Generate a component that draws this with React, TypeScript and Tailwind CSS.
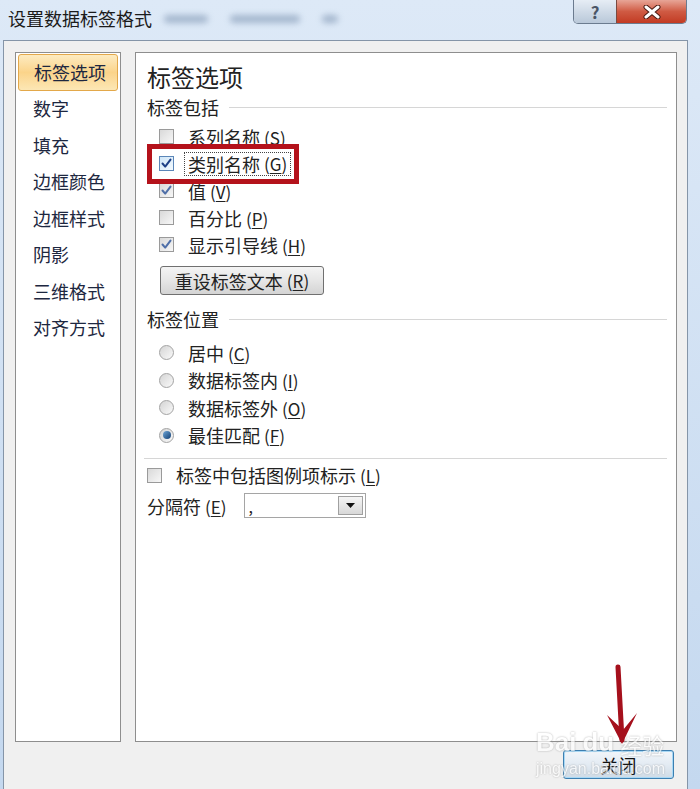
import type { ReactNode } from "react";

const FONT = { fontFamily: '"Microsoft YaHei", "Noto Sans CJK SC", "Noto Sans", sans-serif' };
const LATIN = { fontFamily: '"Liberation Sans", Arial, sans-serif' };

const navItems = ["标签选项", "数字", "填充", "边框颜色", "边框样式", "阴影", "三维格式", "对齐方式"];

function Key({ k }: { k: string }) {
  return (
    <span className="ml-[4px] text-[17px]">
      (<span className="underline underline-offset-2">{k}</span>)
    </span>
  );
}

function CheckBox({ checked, focus }: { checked?: boolean; focus?: boolean }) {
  return (
    <span
      className={
        "flex h-[15px] w-[15px] shrink-0 items-center justify-center border " +
        (focus
          ? "border-[#5b86b8] bg-gradient-to-br from-[#cfe6f8] to-[#f2f9fe]"
          : "border-[#9a9a9a] bg-gradient-to-br from-[#d9d9d9] to-[#f7f7f7]")
      }
    >
      {checked && (
        <svg width="11" height="11" viewBox="0 0 11 11">
          <path
            d="M1.5 5.5 L4.2 8.6 L9.5 1.6"
            fill="none"
            stroke={focus ? "#1d3f86" : "#4f6fa8"}
            strokeWidth="2"
            strokeLinecap="round"
            strokeLinejoin="round"
          />
        </svg>
      )}
    </span>
  );
}

function Radio({ on }: { on?: boolean }) {
  return (
    <span className="flex h-[15px] w-[15px] shrink-0 items-center justify-center rounded-full border border-[#a3a3a3] bg-gradient-to-br from-[#d4d4d4] to-[#fafafa]">
      {on && <span className="h-[8px] w-[8px] rounded-full bg-gradient-to-br from-[#6fa7d8] to-[#123f73]" />}
    </span>
  );
}

function CheckRow({ label, k, checked, focus }: { label: string; k: string; checked?: boolean; focus?: boolean }) {
  return (
    <div className="flex h-[27px] items-center pl-[12px]">
      <CheckBox checked={checked} focus={focus} />
      {focus ? (
        <span className="ml-[10px] flex items-center border border-dotted border-[#444] px-[3px] py-[2px] text-[18px] leading-none text-[#222]">
          {label}
          <Key k={k} />
        </span>
      ) : (
        <span className="ml-[14px] text-[18px] leading-none text-[#222]">
          {label}
          <Key k={k} />
        </span>
      )}
    </div>
  );
}

function RadioRow({ label, k, on }: { label: string; k: string; on?: boolean }) {
  return (
    <div className="flex h-[27.5px] items-center pl-[12px]">
      <Radio on={on} />
      <span className="ml-[14px] text-[18px] leading-none text-[#222]">
        {label}
        <Key k={k} />
      </span>
    </div>
  );
}

function Group({ children }: { children: ReactNode }) {
  return (
    <div className="flex h-[24px] items-center">
      <span className="text-[18px] leading-none text-[#222]">{children}</span>
      <span className="ml-[10px] h-px flex-1 bg-[#d6d6d6]" />
    </div>
  );
}

export default function App() {
  return (
    <div
      className="relative flex h-[789px] w-[700px] flex-col overflow-hidden bg-gradient-to-b from-[#dde9f7] to-[#c4d8ef]"
      style={FONT}
    >
      {/* title bar */}
      <div className="flex h-[40px] shrink-0 items-start">
        <span className="ml-[8px] mt-[7px] text-[18px] leading-[22px] text-[#1b1b1b]">设置数据标签格式</span>
        <div className="ml-[12px] mt-[15px] flex items-center gap-[22px] opacity-60">
          <span className="h-[8px] w-[44px] rounded bg-[#7e95b2] blur-[3px]" />
          <span className="h-[8px] w-[70px] rounded bg-[#7e95b2] blur-[3px]" />
          <span className="h-[8px] w-[16px] rounded bg-[#7e95b2] blur-[3px]" />
        </div>
        <div className="ml-auto mr-[13px] flex h-[24px] overflow-hidden rounded-b-[5px] border border-t-0 border-[#6b7b8f]">
          <div className="flex w-[42px] items-center justify-center bg-gradient-to-b from-[#e6edf5] to-[#b9c8d9] text-[17px] font-bold text-[#4a5566]">
            ?
          </div>
          <div className="flex w-[70px] items-center justify-center border-l border-[#7a4a40] bg-gradient-to-b from-[#e7a597] via-[#cf5a43] to-[#c23a22]">
            <svg width="18" height="14" viewBox="0 0 18 14">
              <path d="M3 2 L15 12 M15 2 L3 12" stroke="#4a1a12" strokeWidth="5" strokeLinecap="round" />
              <path d="M3 2 L15 12 M15 2 L3 12" stroke="#ffffff" strokeWidth="3" strokeLinecap="round" />
            </svg>
          </div>
        </div>
      </div>

      {/* body */}
      <div className="ml-[3px] mr-[12px] flex flex-1 flex-col border-l border-r border-t border-[#8595a8] bg-[#f0f0f0] pl-[11px] pr-[10px] pt-[11px]">
        <div className="flex h-[690px] gap-[14px]">
          {/* nav */}
          <div className="flex w-[106px] flex-col border border-[#8e8e8e] bg-white px-[2px] pt-[1px]">
            {navItems.map((item, i) => (
              <div
                key={item}
                className={
                  "flex h-[36.5px] items-center pl-[15px] text-[18px] text-[#1d2740] " +
                  (i === 0
                    ? "rounded-[3px] border border-[#e3a84a] bg-gradient-to-b from-[#fdebc0] via-[#fbd48a] to-[#fce7b5]"
                    : "")
                }
              >
                {item}
              </div>
            ))}
          </div>

          {/* content */}
          <div className="flex flex-1 flex-col border border-[#8e8e8e] bg-white pl-[11px] pr-[9px] pt-[10px]">
            <div className="h-[28px] text-[24px] leading-[28px] text-[#222]">标签选项</div>
            <div className="mt-[4px]">
              <Group>标签包括</Group>
            </div>
            <div className="mt-[4px] flex flex-col">
              <CheckRow label="系列名称" k="S" />
              <CheckRow label="类别名称" k="G" checked focus />
              <CheckRow label="值" k="V" checked />
              <CheckRow label="百分比" k="P" />
              <CheckRow label="显示引导线" k="H" checked />
            </div>
            <button className="ml-[13px] mt-[8px] flex h-[29px] w-[164px] items-center justify-center rounded-[3px] border border-[#707070] bg-gradient-to-b from-[#f4f4f4] via-[#e6e6e6] to-[#d4d4d4] text-[18px] leading-none text-[#222]">
              重设标签文本
              <Key k="R" />
            </button>
            <div className="mt-[12px]">
              <Group>标签位置</Group>
            </div>
            <div className="mt-[8px] flex flex-col">
              <RadioRow label="居中" k="C" />
              <RadioRow label="数据标签内" k="I" />
              <RadioRow label="数据标签外" k="O" />
              <RadioRow label="最佳匹配" k="F" on />
            </div>
            <div className="-ml-[3px] mt-[9px] h-px bg-[#d6d6d6]" />
            <div className="mt-[5px] flex h-[22px] items-center">
              <CheckBox />
              <span className="ml-[14px] text-[18px] leading-none text-[#222]">
                标签中包括图例项标示
                <Key k="L" />
              </span>
            </div>
            <div className="mt-[7px] flex h-[25px] items-center">
              <span className="text-[18px] leading-none text-[#222]">
                分隔符
                <Key k="E" />
              </span>
              <div className="ml-[17px] flex h-[25px] w-[122px] items-center border border-[#a5a5a5] bg-white">
                <span className="flex-1 pl-[4px] text-[16px] leading-none text-[#222]">,</span>
                <span className="mr-[2px] flex h-[19px] w-[25px] items-center justify-center border border-[#a0a0a0] bg-gradient-to-b from-[#f5f5f5] to-[#d8d8d8]">
                  <svg width="9" height="5" viewBox="0 0 9 5">
                    <path d="M0 0 H9 L4.5 5 Z" fill="#111" />
                  </svg>
                </span>
              </div>
            </div>
          </div>
        </div>

        <div className="mt-[8px] flex justify-end pr-[3px]">
          <button className="flex h-[29px] w-[111px] items-center justify-center rounded-[3px] border border-[#3c7fb1] bg-gradient-to-b from-[#f2f6fa] via-[#e3ebf3] to-[#cfdbe6] text-[18px] leading-none text-[#111] shadow-[inset_0_0_0_1px_#a8d8f5]">
            关闭
          </button>
        </div>
      </div>

      {/* watermark */}
      <div className="pointer-events-none absolute left-[536px] top-[729px] flex flex-col items-start opacity-70">
        <div className="flex items-end gap-[6px]">
          <span className="text-[26px] font-bold leading-none text-white [text-shadow:0_0_2px_#8a8a8a]" style={LATIN}>
            Bai
          </span>
          <span className="text-[26px] font-bold leading-none text-white [text-shadow:0_0_2px_#8a8a8a]" style={LATIN}>
            du
          </span>
          <span className="text-[22px] leading-none text-white [text-shadow:0_0_2px_#8a8a8a]">经验</span>
        </div>
        <span className="mt-[6px] text-[16px] leading-none text-white [text-shadow:0_0_2px_#8a8a8a]" style={LATIN}>
          jingyan.baidu.com
        </span>
      </div>

      {/* red highlight box */}
      <div className="pointer-events-none absolute left-[147px] top-[144px] h-[40px] w-[152px] border-[5px] border-[#b4121b]" />

      {/* red arrow */}
      <svg className="pointer-events-none absolute left-[600px] top-[660px]" width="46" height="92" viewBox="0 0 46 92">
        <path d="M18 7 L22 80" stroke="#a5101c" strokeWidth="5" strokeLinecap="round" />
        <path d="M7 55 L22 84 L37 53 L23 70 Z" fill="#a5101c" />
      </svg>
    </div>
  );
}
